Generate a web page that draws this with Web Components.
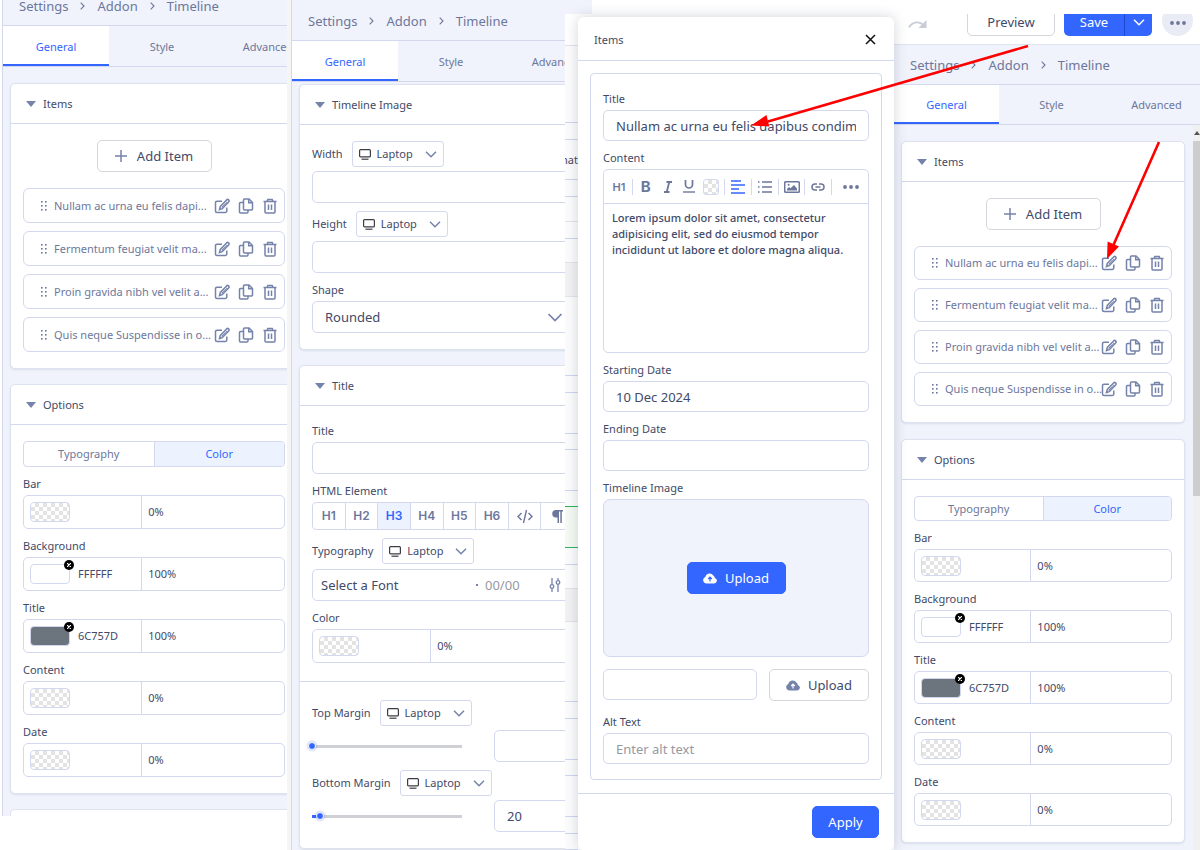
<!DOCTYPE html>
<html lang="en">
<head>
<meta charset="utf-8">
<meta name="viewport" content="width=device-width, initial-scale=1">
<title>Timeline addon settings</title>
<style>
  :root {
    --blue: #3366ff;
    --line: #d3d8ee;
    --pale: #f0f3fb;
    --active: #edf3fe;
    --ink: #424a68;
    --muted: #6d779c;
    --icon: #7583ab;
    --field-h: 32px;
    --label-h: 18px;
  }
  body {
    margin: 0;
    min-height: 100vh;
    background: #fff;
    color: var(--ink);
    font: 11px/16px "Noto Sans", "Open Sans", sans-serif;
    overflow-x: hidden;
  }
</style>
</head>
<body>
<app-page></app-page>

<script>
const RESET = `
  *, *::before, *::after { box-sizing: border-box; }
  button, input, select, textarea { font: inherit; color: inherit; margin: 0; padding: 0; border: 0; background: none; min-width: 0; outline: none; border-radius: 0; }
  button, select { cursor: pointer; }
  a { color: inherit; text-decoration: none; }
  svg { display: block; flex: none; }
`;

const ICONS = {
  edit: [16, 16, '<path d="M8 3.2H3A1.5 1.5 0 0 0 1.500 4.700v8.300A1.500 1.500 0 0 0 3 14.500h8.300a1.500 1.500 0 0 0 1.500-1.500V9.500"/><path d="M5.500 11.500l.8-3 6.300-6.600a1.400 1.400 0 0 1 2 2L8.300 10.600z"/><path d="M11.400 3.200l2 2M7.700 9.300l4-4.200" stroke-width="1"/>'],
  copy: [16, 16, '<path d="M5 4.500H2.500a1 1 0 0 0-1 1v8.500a1 1 0 0 0 1 1H9a1 1 0 0 0 1-1v-2"/><path d="M6.500 1H11l3.500 3.500V11a1 1 0 0 1-1 1h-7a1 1 0 0 1-1-1V2a1 1 0 0 1 1-1z"/><path d="M10.700 1v3.800h3.800"/>'],
  trash: [16, 16, '<path d="M1.500 3.500h13M5 3.500l.8-2h4.400l.8 2M3 3.500V14a1 1 0 0 0 1 1h8a1 1 0 0 0 1-1V3.500M6.500 6.500v5.500M9.500 6.500v5.500"/>'],
  plus: [12, 12, '<path d="M6 0v12M0 6h12"/>'],
  crumb: [5, 8, '<path d="M.7.7L4 4 .7 7.300" stroke-width="1.100"/>'],
  caret: [10, 6, '<path d="M0 0h10L5 6z" fill="currentColor" stroke="none"/>'],
  grip: [6, 10, '<g fill="currentColor" stroke="none"><rect width="1.600" height="1.600"/><rect x="4" width="1.600" height="1.600"/><rect y="4" width="1.600" height="1.600"/><rect x="4" y="4" width="1.600" height="1.600"/><rect y="8" width="1.600" height="1.600"/><rect x="4" y="8" width="1.600" height="1.600"/></g>'],
  down: [12, 7, '<path d="M1 .8l5 5 5-5"/>'],
  downBig: [16, 9, '<path d="M1.500 1L8 7.500 14.500 1" stroke-width="1.700"/>'],
  laptop: [12, 11, '<rect x=".6" y=".6" width="10.800" height="7.300" rx="1" stroke="#3d3d45" stroke-width="1.200"/><path d="M2.500 10.200h7" stroke="#3d3d45" stroke-width="1.200"/>'],
  close: [11, 11, '<path d="M1 1l9 9M10 1l-9 9" stroke="#111"/>'],
  tune: [12, 14, '<path d="M3 0v6.500M3 10.500V14M9 0v2.500M9 6.500V14" stroke-width="1.300"/><circle cx="3" cy="8.500" r="1.800" stroke-width="1.300"/><circle cx="9" cy="4.500" r="1.800" stroke-width="1.300"/>'],
  code: [16, 15, '<path d="M4.500 4L1 7.500 4.500 11M11.500 4L15 7.500 11.500 11M9.500 1l-3 13" stroke-width="1.400"/>'],
  para: [12, 13, '<path d="M5 0h7v1.600h-1.200V13H9.300V1.600H8V13H6.500V7.500H5A3.750 3.750 0 0 1 5 0z" fill="currentColor" stroke="none"/>'],
  italic: [10, 12, '<path d="M3.500 1H9M1 11h5.500M6.300 1L3.700 11" stroke-width="1.800"/>'],
  underline: [12, 13, '<path d="M2.500 0v4.500a3.500 3.500 0 0 0 7 0V0" stroke-width="1.700"/><path d="M0 12h12" stroke-width="1.400"/>'],
  align: [14, 14, '<path d="M0 1h10M0 5h14M0 9h8M0 13h14" stroke-width="1.600"/>'],
  list: [14, 12, '<path d="M4 1h10M4 6h10M4 11h10M0 1h1.500M0 6h1.500M0 11h1.500" stroke-width="1.300"/>'],
  image: [16, 12, '<rect x=".7" y=".7" width="14.600" height="10.600" rx="1.200"/><path d="M3 9.500v-1.500l2-2 1.500 1.300L10 4l3 3.500v2z" fill="currentColor" stroke="none"/><circle cx="4.600" cy="3.800" r="1" fill="currentColor" stroke="none"/>'],
  link: [14, 8, '<path d="M6 7H4a3 3 0 0 1 0-6h2M8 1h2a3 3 0 0 1 0 6H8M4.500 4h5"/>'],
  dots: [16, 4, '<g fill="currentColor" stroke="none"><circle cx="2" cy="2" r="1.900"/><circle cx="8" cy="2" r="1.900"/><circle cx="14" cy="2" r="1.900"/></g>'],
  cloud: [14, 12, '<path d="M3.600 11.500A3.400 3.400 0 0 1 2.200 5 4.400 4.400 0 0 1 10.300 3.600 3 3 0 0 1 11.800 6a2.800 2.800 0 0 1-.8 5.500z" fill="currentColor" stroke="none"/><path d="M7 9.500V5.500M5.200 7L7 5.200 8.800 7" stroke="var(--cut, #fff)" stroke-width="1.200"/>'],
  redo: [20, 11, '<path d="M1 7.500C4 2 10 1 15 4.500" stroke-width="1.800"/><path d="M18.500 0v8h-8z" fill="currentColor" stroke="none"/>'],
};
const icon = (n) => {
  const [w, h, body] = ICONS[n];
  return `<svg width="${w}" height="${h}" viewBox="0 0 ${w} ${h}" fill="none" stroke="currentColor" stroke-width="1.500" aria-hidden="true">${body}</svg>`;
};

class Base extends HTMLElement {
  connectedCallback() {
    if (this.shadowRoot) return;
    this.attachShadow({ mode: 'open' }).innerHTML = `<style>${RESET}${this.css()}</style>${this.html()}`;
  }
  at(name, fallback = '') { return this.getAttribute(name) ?? fallback; }
  css() { return ''; }
  html() { return '<slot></slot>'; }
}
const define = (name, css, html) => customElements.define(name, class extends Base {
  css() { return css; }
  html() { return html(this); }
});

/* Breadcrumb and the three tabs below it */
define('crumb-bar', `
  :host { display: flex; align-items: flex-end; height: var(--crumb-h, 41px); padding: 0 0 9px 16px; overflow: hidden;
    background: var(--pale); border-bottom: 1px solid var(--line); box-sizing: border-box; }
  nav { display: flex; align-items: center; gap: 12px; font-size: 13px; line-height: 20px; color: var(--muted); }
`, () => `<nav aria-label="Breadcrumb"><a href="#settings">Settings</a>${icon('crumb')}<a href="#addon">Addon</a>${icon('crumb')}<a href="#timeline">Timeline</a></nav>`);

define('tab-bar', `
  :host { display: flex; height: 41px; overflow: hidden; background: var(--pale); border-bottom: 1px solid var(--line); box-sizing: border-box; }
  button { flex: 0 0 var(--tab-w, 106px); color: var(--muted); padding-top: 3px; border-bottom: 2px solid transparent; }
  button[aria-selected=true] { background: #fff; color: var(--blue); border-color: var(--blue); }
`, () => ['General', 'Style', 'Advanced'].map((t, i) => `<button role="tab" aria-selected="${i === 0}">${t}</button>`).join(''));

define('ui-card', `
  :host { display: block; background: #fff; border: 1px solid #dde2f1; border-radius: 5px; box-shadow: 0 1px 2px rgba(60,70,110,.12); }
  h2 { display: flex; align-items: center; gap: 7px; height: 40px; margin: 0; padding-left: 15px; font: inherit; font-weight: 400;
    border-bottom: 1px solid var(--line); }
  svg { color: var(--icon); }
  .body { padding: 16px 12px; }
`, (e) => `<h2>${icon('caret')}<span>${e.at('heading')}</span></h2><div class="body"><slot></slot></div>`);

define('add-item', `
  :host { display: flex; justify-content: center; margin-bottom: 16px; }
  button { display: flex; align-items: center; justify-content: center; gap: 10px; width: 115px; height: 32px;
    font-size: 13px; border: 1px solid #d5d5dc; border-radius: 5px; background: #fff; }
  svg { color: var(--icon); }
`, () => `<button>${icon('plus')}<span>Add Item</span></button>`);

define('item-row', `
  :host { display: flex; align-items: center; height: var(--row-h, 35px); padding: 0 6px 0 17px; border: 1px solid var(--line);
    border-radius: 6px; color: var(--muted); background: #fff; box-sizing: border-box; }
  :host(:not(:last-of-type)) { margin-bottom: 8px; }
  span { flex: 1 1 0; min-width: 0; margin-left: 7px; white-space: nowrap; }
  div { display: flex; gap: 8px; color: var(--icon); }
`, (e) => `${icon('grip')}<span>${e.at('text')}</span><div>
  <button aria-label="Edit">${icon('edit')}</button><button aria-label="Duplicate">${icon('copy')}</button><button aria-label="Delete">${icon('trash')}</button></div>`);

define('seg-control', `
  :host { display: flex; height: var(--seg-h, 26px); border: 1px solid var(--line); border-radius: 4px; overflow: hidden; color: var(--muted); box-sizing: border-box; }
  button { display: flex; align-items: center; justify-content: center; flex: 1 1 0; }
  button + button { border-left: 1px solid var(--line); }
  button[aria-pressed=true] { background: var(--active); color: var(--blue); }
  :host([tags]) button { font: 600 12px/16px Inter, sans-serif; }
`, (e) => e.at('options').split(',').map((o) => `<button aria-pressed="${o === e.at('value')}"${ICONS[o] ? ` aria-label="${o}"` : ''}>${ICONS[o] ? icon(o) : o}</button>`).join(''));

/* Swatch, hex value and opacity */
const CHECK = 'conic-gradient(#e3e3e3 25%, #fff 0 50%, #e3e3e3 0 75%, #fff 0) 0 0 / 8px 8px';
define('color-field', `
  :host { display: block; padding-top: 8px; }
  label { display: block; height: var(--label-h); line-height: 18px; margin-bottom: 2px; }
  .box { display: flex; height: var(--color-h, 34px); border: 1px solid var(--line); border-radius: 5px; }
  .left { display: flex; align-items: center; gap: 8px; flex: 45 1 0; min-width: 0; padding-left: 6px; border-right: 1px solid var(--line); }
  .swatch { position: relative; width: 40px; height: 20px; flex: none; border: 1px solid var(--line); border-radius: 4px; background: ${CHECK}; }
  .clear { position: absolute; top: -5px; right: -5px; width: 10px; height: 10px; border-radius: 50%; background: #000; display: grid; place-items: center; }
  .hex { width: 56px; }
  .alpha { flex: 55 1 0; padding-left: 6px; }
`, (e) => {
  const c = e.at('color');
  return `<label for="h">${e.at('label')}</label><div class="box"><div class="left">
    <button class="swatch" aria-label="Pick colour"${c ? ` style="background:#${c}"` : ''}>${c ? '<span class="clear"><svg width="4" height="4" viewBox="0 0 4 4" stroke="#fff" stroke-width="1.200"><path d="M0 0l4 4M4 0L0 4"/></svg></span>' : ''}</button>
    <input class="hex" id="h" value="${c}"></div><input class="alpha" aria-label="Opacity" value="${e.at('alpha', '0%')}"></div>`;
});

/* Label with the device drop-down beside it */
define('device-label', `
  :host { display: flex; align-items: center; gap: 9px; height: 26px; margin-bottom: 4px; }
  .pick { display: flex; align-items: center; width: 92px; height: 26px; padding: 0 6px; border: 1px solid var(--line); border-radius: 3px; }
  select { flex: 1; appearance: none; padding-left: 6px; height: 24px; }
  .pick svg:last-child { color: var(--icon); pointer-events: none; }
`, (e) => `<label for="d">${e.at('label')}</label><div class="pick">${icon('laptop')}<select id="d" aria-label="${e.at('label')} device"><option>Laptop</option></select>${icon('down')}</div>`);

define('text-field', `
  :host { display: block; min-width: 0; }
  label { display: block; height: var(--label-h); line-height: 18px; margin: 0 0 2px; }
  :host([gap]) { padding-top: 8px; }
  input { display: block; width: 100%; height: var(--field-h); padding: 0 12px; font-size: 13px; border: 1px solid var(--line); border-radius: 5px; background: #fff; }
  input::placeholder { color: #98999f; opacity: 1; }
`, (e) => `${e.at('label') ? `<label for="i">${e.at('label')}</label>` : ''}<input id="i" value="${e.at('value')}" placeholder="${e.at('placeholder')}"${e.at('label') ? '' : ` aria-label="${e.at('name')}"`}>`);

define('select-field', `
  :host { display: block; padding-top: 8px; }
  label { display: block; height: var(--label-h); line-height: 18px; margin-bottom: 2px; }
  div { display: flex; align-items: center; height: 32px; padding: 0 10px 0 12px; border: 1px solid var(--line); border-radius: 5px; }
  select { flex: 1; height: 30px; appearance: none; font-size: 13px; }
  svg { color: var(--icon); pointer-events: none; }
`, (e) => `<label for="s">${e.at('label')}</label><div><select id="s"><option>${e.at('value')}</option></select>${icon('downBig')}</div>`);

define('font-field', `
  :host { display: flex; align-items: center; height: 32px; margin-top: 5px; padding: 0 12px 0 8px; border: 1px solid var(--line); border-radius: 5px; font-size: 13px; box-sizing: border-box; }
  .font { flex: 1; text-align: left; }
  i { width: 2px; height: 2px; background: var(--icon); margin-right: 7px; }
  .size { color: #98999f; width: 64px; text-align: left; }
  .tune { color: var(--icon); }
`, () => `<button class="font">Select a Font</button><i></i><button class="size">00/00</button><button class="tune" aria-label="Font settings">${icon('tune')}</button>`);

define('range-field', `
  :host { display: flex; align-items: center; justify-content: space-between; height: 32px; }
  .r { -webkit-appearance: none; appearance: none; width: 158px; height: 12px; margin-left: -4px;
    background: linear-gradient(var(--blue), var(--blue)) 4px center / var(--fill) 3px no-repeat,
      linear-gradient(#cfcfd6, #cfcfd6) 4px center / calc(100% - 8px) 3px no-repeat; }
  .r::-webkit-slider-thumb { -webkit-appearance: none; width: 8px; height: 8px; border-radius: 50%; background: var(--blue);
    border: 1px solid #fff; box-shadow: 0 0 2px 1px rgba(60,90,200,.25); }
  text-field { width: 80px; }
`, (e) => `<input class="r" type="range" min="0" max="400" value="${e.at('value', '0')}" aria-label="${e.at('name')}" style="--fill:${e.at('value') ? '6px' : '0px'}"><text-field name="${e.at('name')} value" value="${e.at('value')}"></text-field>`);

/* Settings panel */
define('side-panel', `
  :host { display: block; background: var(--pale); overflow: hidden; }
`, () => '<crumb-bar></crumb-bar><tab-bar></tab-bar><slot></slot>');

const itemsAndOptions = `
  <ui-card heading="Items">
    <add-item></add-item>
    <item-row text="Nullam ac urna eu felis dapi..."></item-row>
    <item-row text="Fermentum feugiat velit ma..."></item-row>
    <item-row text="Proin gravida nibh vel velit a..."></item-row>
    <item-row text="Quis neque Suspendisse in o..."></item-row>
  </ui-card>
  <ui-card heading="Options">
    <seg-control options="Typography,Color" value="Color"></seg-control>
    <color-field label="Bar"></color-field>
    <color-field label="Background" color="FFFFFF" alpha="100%"></color-field>
    <color-field label="Title" color="6C757D" alpha="100%"></color-field>
    <color-field label="Content"></color-field>
    <color-field label="Date"></color-field>
  </ui-card>`;

define('items-settings', `
  :host { display: grid; grid-template-columns: minmax(0, 1fr); gap: var(--card-gap, 16px); padding: 16px 8px 0 7px; }
`, () => itemsAndOptions);

define('style-settings', `
  :host { display: grid; grid-template-columns: minmax(0, 1fr); gap: 15px; padding: 2px 0 1px 7px; margin-right: -22px; }
  text-field + device-label, range-field + device-label, seg-control + device-label { margin-top: 8px; }
  hr { margin: 18px -12px; border: 0; border-top: 1px solid var(--line); }
  .tags { --seg-h: 28px; }
`, () => `
  <ui-card heading="Timeline Image">
    <device-label label="Width"></device-label><text-field name="Width"></text-field>
    <device-label label="Height"></device-label><text-field name="Height"></text-field>
    <select-field label="Shape" value="Rounded"></select-field>
  </ui-card>
  <ui-card heading="Title">
    <text-field label="Title"></text-field>
    <group-caption>HTML Element</group-caption>
    <seg-control class="tags" tags options="H1,H2,H3,H4,H5,H6,code,para" value="H3"></seg-control>
    <device-label label="Typography"></device-label>
    <font-field></font-field>
    <color-field label="Color"></color-field>
    <hr>
    <device-label label="Top Margin"></device-label><range-field name="Top margin"></range-field>
    <device-label label="Bottom Margin"></device-label><range-field name="Bottom margin" value="20"></range-field>
  </ui-card>`);
define('group-caption', `:host { display: block; padding-top: 8px; line-height: 18px; margin-bottom: 2px; }`, () => '<slot></slot>');

/* Editor canvas that shows between the panels */
const CANVAS = [[77, 1], [17, 1], [40, 1, 'nat'], [17, 1], [25, 2], [17, 1], [24, 2], [34, 3], [79, 1], [17, 1], [41, 1], [16, 1], [41, 1],
  [16, 4], [41, 5], [17, 1], [24, 2], [33, 3], [80, 1], [17, 1], [41, 1], [16, 1], [41, 1], [17, 1], [16, 1]];
define('canvas-strip', `
  :host { display: block; background: #fcfcfd; overflow: hidden; }
  header { height: 32px; background: #fff; border-bottom: 1px solid #e3e3e6; }
  div { display: flex; justify-content: flex-end; align-items: center; border-bottom: 1px solid #cfd5ee; white-space: nowrap; }
  .k2 { border-color: #e4e4e6; } .k3 { background: #f2f2f3; border-color: #e4e4e6; }
  .k4 { border-color: #2eb35f; } .k5 { background: #f5faf3; border-color: #2eb35f; }
`, () => `<header></header>${CANVAS.map(([h, k, t]) => `<div class="k${k}" style="height:${h}px">${t || ''}</div>`).join('')}`);

/* Text editor in the dialog */
define('rich-editor', `
  :host { display: block; padding-top: 8px; }
  label { display: block; line-height: 18px; margin-bottom: 2px; }
  .box { border: 1px solid var(--line); border-radius: 5px; }
  .bar { display: flex; align-items: center; height: 34px; padding-left: 4px; border-bottom: 1px solid var(--line); color: var(--muted); }
  .bar button { display: grid; place-items: center; width: 22px; height: 22px; }
  .bar i { width: 1px; height: 16px; margin: 0 2px; background: var(--line); }
  .bar .h { font: 600 11px/16px Inter, sans-serif; }
  .bar .b { font: 700 15px/16px Inter, sans-serif; }
  .bar .on { color: var(--blue); }
  .bar .more { width: 34px; }
  .sw span { width: 16px; height: 16px; border: 1px solid var(--line); border-radius: 3px; background: ${CHECK}; }
  textarea { display: block; width: 100%; height: 148px; padding: 6px 8px; resize: none; line-height: 16px; font-weight: 500; overflow: hidden; }
`, () => `<label for="t">Content</label><div class="box"><div class="bar" role="toolbar">
  <button class="h">H1</button><i></i><button class="b">B</button><button aria-label="Italic">${icon('italic')}</button><button aria-label="Underline">${icon('underline')}</button><button class="sw" aria-label="Text colour"><span></span></button><i></i>
  <button class="on" aria-label="Align">${icon('align')}</button><i></i><button aria-label="List">${icon('list')}</button><i></i><button aria-label="Image">${icon('image')}</button><i></i><button aria-label="Link">${icon('link')}</button><i></i><button class="more" aria-label="More">${icon('dots')}</button></div>
  <textarea id="t">Lorem ipsum dolor sit amet, consectetur
adipisicing elit, sed do eiusmod tempor
incididunt ut labore et dolore magna aliqua.</textarea></div>`);

define('ui-button', `
  :host { display: inline-block; }
  button { display: flex; align-items: center; justify-content: center; gap: 8px; width: 100%; height: 32px; font-size: 13px; border: 1px solid #d5d5dc; border-radius: 5px; background: #fff; }
  svg { color: var(--icon); }
  :host([primary]) button { background: var(--blue); border-color: var(--blue); color: #fff; --cut: var(--blue); }
  :host([primary]) svg { color: #fff; }
`, (e) => `<button>${e.hasAttribute('upload') ? icon('cloud') : ''}<slot></slot></button>`);

define('items-dialog', `
  :host { --field-h: 31px; position: relative; z-index: 1; display: flex; flex-direction: column; min-width: 0; margin-top: 3px; background: #fff; border-radius: 6px;
    box-shadow: 0 0 14px rgba(40,50,80,.2); }
  header { display: flex; align-items: center; justify-content: space-between; height: 44px; padding: 2px 18px 0 16px; border-bottom: 1px solid var(--line); }
  h2 { margin: 0; font: inherit; }
  .body { flex: 1; padding: 12px; }
  .frame { padding: 16px 12px 15px; border: 1px solid var(--line); border-radius: 4px; }
  .cap { padding-top: 8px; line-height: 18px; margin-bottom: 2px; }
  .drop { display: grid; place-items: center; height: 158px; border: 1px solid var(--line); border-radius: 7px; background: var(--pale); }
  .drop ui-button { width: 99px; }
  .row { display: grid; grid-template-columns: minmax(0, 155fr) minmax(0, 101fr); gap: 12px; margin: 12px 0; }
  footer { display: flex; justify-content: flex-end; padding: 12px 15px; border-top: 1px solid var(--line); }
  footer ui-button { width: 67px; }
`, () => `<header><h2>Items</h2><button aria-label="Close">${icon('close')}</button></header>
  <div class="body"><div class="frame">
    <text-field label="Title" value="Nullam ac urna eu felis dapibus condimentum"></text-field>
    <rich-editor></rich-editor>
    <text-field gap label="Starting Date" value="10 Dec 2024"></text-field>
    <text-field gap label="Ending Date"></text-field>
    <div class="cap">Timeline Image</div>
    <div class="drop"><ui-button primary upload>Upload</ui-button></div>
    <div class="row"><text-field name="Image path"></text-field><ui-button upload>Upload</ui-button></div>
    <text-field label="Alt Text" placeholder="Enter alt text"></text-field>
  </div></div>
  <footer><ui-button primary>Apply</ui-button></footer>`);

define('tool-bar', `
  :host { display: flex; align-items: flex-end; height: 31px; padding: 0 7px 8px 14px; overflow: hidden; background: #fff; border-bottom: 1px solid #dfe3ee; font-size: 13px; box-sizing: border-box; }
  button { height: 32px; flex: none; padding-top: 4px; }
  .redo { width: 20px; height: 22px; margin-right: 39px; color: #c9ccd6; padding: 0; }
  .preview { width: 88px; border: 1px solid #d5d5dc; border-radius: 5px; margin-right: 9px; }
  .save { width: 60px; background: var(--blue); color: #fff; border-radius: 5px 0 0 5px; }
  .arrow { display: grid; place-items: center; width: 28px; background: var(--blue); color: #fff; border-left: 1px solid #1d49d0; border-radius: 0 5px 5px 0; margin-right: 10px; }
  .more { display: grid; place-items: center; width: 31px; height: 31px; border-radius: 50%; background: #e9ecf5; color: var(--muted); }
`, () => `<button class="redo" aria-label="Redo">${icon('redo')}</button><button class="preview">Preview</button><button class="save">Save</button><button class="arrow" aria-label="Save options">${icon('down')}</button><button class="more" aria-label="More">${icon('dots')}</button>`);

define('scroll-rail', `
  :host { display: flex; flex-direction: column; width: 7px; background: #f0f0f0; }
  span { height: 16px; display: grid; place-items: center; overflow: hidden; color: #555; }
  i { height: 355px; background: #cdcdcd; }
`, () => `<span><svg width="6" height="4" viewBox="0 0 6 4" fill="currentColor"><path d="M0 4l3-4 3 4z"/></svg></span><i></i>`);

/* Red pointers laid over the screens */
define('note-arrows', `
  :host { position: absolute; inset: 0 0 auto auto; width: 450px; height: 280px; z-index: 2; pointer-events: none; }
`, () => `<svg width="450" height="280" viewBox="750 0 450 280" fill="#ff0000" stroke="#ff0000"><path d="M1028 46L768 121.500M1159 142L1113 246" stroke-width="2.600"/><path d="M751 125.500L766.500 115l2.800 11.500z M1107 259l.6-17.500 11.400 5z" stroke="none"/></svg>`);

define('app-page', `
  :host { position: relative; display: grid; grid-template-columns: minmax(0, 287fr) minmax(0, 278fr) minmax(0, 635fr); min-height: 100vh; overflow: hidden; }
  .a { --crumb-h: 26px; --card-gap: 15px; align-self: start; margin-left: 2px; border-left: 1px solid var(--line); }
  .a items-settings { margin-right: -19px; }
  .stub { height: 7px; margin: 15px 0 0 7px; background: #fff; border: solid #dde2f1; border-width: 1px 0 0 1px; border-radius: 5px 0 0 0; }
  .bwrap { display: flex; border-left: 4px solid #f5f5f6; min-width: 0; }
  .b { flex: 1; min-width: 0; border-left: 1px solid var(--line); }
  .right { display: flex; flex-direction: column; min-width: 0; background: #fff; }
  .lead { width: 27px; height: 14px; background: var(--pale); }
  .scene { flex: 1; display: grid; grid-template-columns: 13px minmax(0, 316fr) minmax(0, 306fr); min-width: 0; }
  .c { --row-h: 34px; --color-h: 33px; --seg-h: 25px; display: flex; flex-direction: column; min-width: 0; background: var(--pale); }
  .c crumb-bar { --crumb-h: 40px; }
  .c tab-bar { --tab-w: 105px; height: 40px; }
  .cbody { display: flex; flex: 1; }
  .cbody items-settings { flex: 1; align-self: flex-start; padding-bottom: 6px; }
`, () => `
  <side-panel class="a"><items-settings></items-settings><div class="stub"></div></side-panel>
  <div class="bwrap"><side-panel class="b"><style-settings></style-settings></side-panel></div>
  <div class="right"><div class="lead"></div><div class="scene">
    <canvas-strip></canvas-strip>
    <items-dialog></items-dialog>
    <div class="c"><tool-bar></tool-bar><crumb-bar></crumb-bar><tab-bar></tab-bar><div class="cbody"><items-settings></items-settings><scroll-rail></scroll-rail></div></div>
  </div></div>
  <note-arrows></note-arrows>`);
</script>
</body>
</html>
